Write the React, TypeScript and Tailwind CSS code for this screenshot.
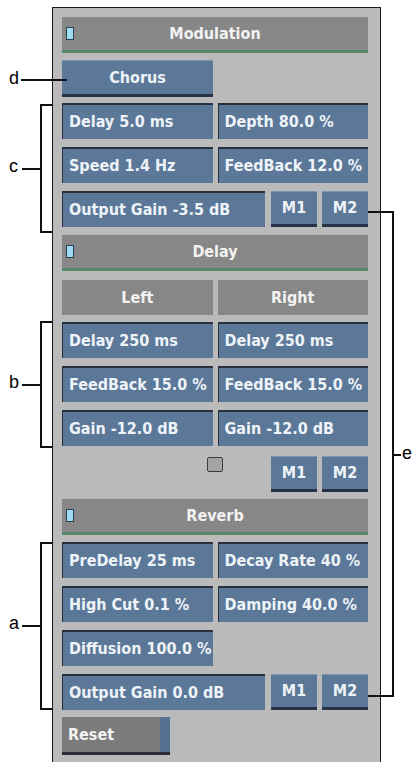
import React from 'react';

const font = "font-['DejaVu_Sans_Condensed','DejaVu_Sans',sans-serif] font-stretch-condensed font-bold";

const Field = ({ label, className = '' }: { label: string; className?: string }) => (
  <div className={`h-[36px] flex items-center pl-[6px] bg-[#5b7898] border-t-2 border-l border-[#28313d] text-[16px] text-[#eef3f8] whitespace-nowrap overflow-hidden ${font} ${className}`}>
    {label}
  </div>
);

const RaisedBtn = ({ label, className = '' }: { label: string; className?: string }) => (
  <div className={`flex items-center justify-center bg-[#5b7898] border-t border-[#7f97b2] border-b-[3px] border-b-[#283247] text-[16px] text-[#eef3f8] ${font} ${className}`}>
    {label}
  </div>
);

const Header = ({ title }: { title: string }) => (
  <div className="h-[36px] flex items-center bg-[#878787] border-b-[3px] border-[#56896a]">
    <div className="ml-[4px] w-[8px] h-[13px] bg-[#9edcf4] border border-[#2c3f4c]" />
    <div className={`flex-1 text-center pr-[12px] text-[16px] text-[#f2f2f2] ${font}`}>{title}</div>
  </div>
);

const MPair = () => (
  <div className="flex gap-[5px]">
    <RaisedBtn label="M1" className="w-[46px] h-[36px]" />
    <RaisedBtn label="M2" className="w-[46px] h-[36px]" />
  </div>
);

const Bracket = ({ top, bottom, mid, letter }: { top: number; bottom: number; mid: number; letter: string }) => (
  <>
    <div className="absolute left-[40px] w-[2px] bg-[#111]" style={{ top, height: bottom - top + 2 }} />
    <div className="absolute left-[40px] w-[13px] h-[2px] bg-[#111]" style={{ top }} />
    <div className="absolute left-[40px] w-[13px] h-[2px] bg-[#111]" style={{ top: bottom }} />
    <div className="absolute left-[22px] w-[19px] h-[2px] bg-[#111]" style={{ top: mid }} />
    <div className="absolute left-[9px] text-[18px] leading-none text-black font-['Liberation_Sans',sans-serif]" style={{ top: mid - 11 }}>{letter}</div>
  </>
);

export default function App() {
  return (
    <div className="relative w-[418px] h-[762px] bg-white overflow-hidden">
      <div className="ml-[52px] mt-[7px] w-[329px] min-h-[760px] border border-[#1a1a1a] bg-[#bababa] pl-[9px] pr-[12px] pt-[9px]">
        <Header title="Modulation" />
        <RaisedBtn label="Chorus" className="mt-[7px] w-[151px] h-[37px]" />

        <div className="mt-[6px] grid grid-cols-2 gap-x-[5px] gap-y-[8px]">
          <Field label="Delay 5.0 ms" />
          <Field label="Depth 80.0 %" />
          <Field label="Speed 1.4 Hz" />
          <Field label="FeedBack 12.0 %" />
        </div>
        <div className="mt-[8px] flex gap-[6px]">
          <Field label="Output Gain -3.5 dB" className="flex-1" />
          <MPair />
        </div>

        <div className="mt-[8px]">
          <Header title="Delay" />
        </div>
        <div className="mt-[9px] grid grid-cols-2 gap-x-[5px] gap-y-[8px]">
          <div className={`h-[35px] flex items-center justify-center bg-[#878787] text-[16px] text-[#f2f2f2] ${font}`}>Left</div>
          <div className={`h-[35px] flex items-center justify-center bg-[#878787] text-[16px] text-[#f2f2f2] ${font}`}>Right</div>
        </div>
        <div className="mt-[7px] grid grid-cols-2 gap-x-[5px] gap-y-[8px]">
          <Field label="Delay 250 ms" />
          <Field label="Delay 250 ms" />
          <Field label="FeedBack 15.0 %" />
          <Field label="FeedBack 15.0 %" />
          <Field label="Gain -12.0 dB" />
          <Field label="Gain -12.0 dB" />
        </div>
        <div className="mt-[10px] flex items-start">
          <div className="ml-[145px] mt-[1px] w-[16px] h-[15px] rounded-[2px] bg-[#a4a4a4] border border-[#3c3c3c]" />
          <div className="flex-1" />
          <MPair />
        </div>

        <div className="mt-[7px]">
          <Header title="Reverb" />
        </div>
        <div className="mt-[7px] grid grid-cols-2 gap-x-[5px] gap-y-[8px]">
          <Field label="PreDelay 25 ms" />
          <Field label="Decay Rate 40 %" />
          <Field label="High Cut 0.1 %" />
          <Field label="Damping 40.0 %" />
          <Field label="Diffusion 100.0 %" />
        </div>
        <div className="mt-[8px] flex gap-[6px]">
          <Field label="Output Gain 0.0 dB" className="flex-1" />
          <MPair />
        </div>
        <div className="mt-[7px] flex w-[108px] h-[38px] border-b-[3px] border-[#2b2f36]">
          <div className={`flex-1 flex items-center pl-[6px] bg-[#7b7b7b] text-[16px] text-[#f2f2f2] ${font}`}>Reset</div>
          <div className="w-[10px] bg-[#56718f]" />
        </div>
      </div>

      {/* callouts */}
      <div className="absolute left-[9px] top-[69px] text-[18px] leading-none text-black font-['Liberation_Sans',sans-serif]">d</div>
      <div className="absolute left-[21px] top-[79px] w-[46px] h-[2px] bg-[#111]" />
      <Bracket top={104} bottom={231} mid={168} letter="c" />
      <Bracket top={321} bottom={446} mid={384} letter="b" />
      <Bracket top={542} bottom={708} mid={625} letter="a" />

      <div className="absolute left-[368px] top-[211px] w-[26px] h-[2px] bg-[#111]" />
      <div className="absolute left-[392px] top-[211px] w-[2px] h-[486px] bg-[#111]" />
      <div className="absolute left-[368px] top-[695px] w-[26px] h-[2px] bg-[#111]" />
      <div className="absolute left-[392px] top-[454px] w-[9px] h-[2px] bg-[#111]" />
      <div className="absolute left-[402px] top-[444px] text-[18px] leading-none text-black font-['Liberation_Sans',sans-serif]">e</div>
    </div>
  );
}
